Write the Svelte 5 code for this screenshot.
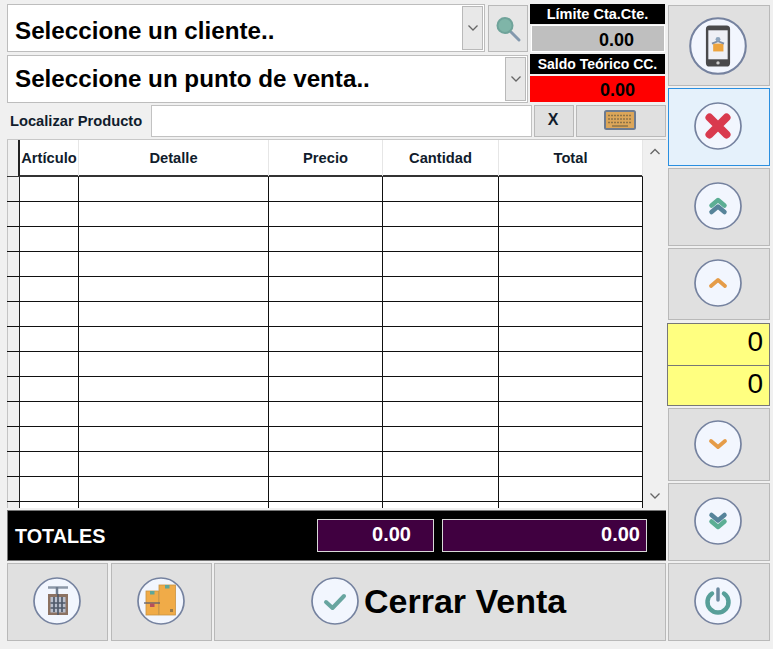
<script>
  // row markers for the empty sale grid
  const rows = Array.from({ length: 14 }, (_, i) => i);
  const cols = ['Artículo', 'Detalle', 'Precio', 'Cantidad', 'Total'];
</script>

{#snippet chevron()}
  <svg class="chev" viewBox="0 0 12 8"><path d="M1.500 1.500 6 6l4.500-4.500" /></svg>
{/snippet}

{#snippet ring(size, body)}
  <svg class="ring" width={size} height={size} viewBox="0 0 48 48">
    <circle cx="24" cy="24" r="23" class="disc" />
    {@render body()}
  </svg>
{/snippet}

{#snippet phone()}
  <rect x="14" y="7" width="20" height="34" rx="3" fill="#4a4a4c" />
  <rect x="16" y="11" width="16" height="24" fill="#eef0f6" />
  <circle cx="24" cy="38" r="1.400" fill="#ccc" />
  <rect x="20" y="22" width="8.500" height="6.500" fill="#eda43e" />
  <path d="M19 22l5-2 5 2" fill="none" stroke="#7f8fa6" stroke-width="1.500" />
  <circle cx="24" cy="18.500" r="2" fill="#8ea5bd" />
{/snippet}

{#snippet cross()}
  <path d="M15.500 15.500l17 17M32.500 15.500l-17 17" stroke="#d93a4e" stroke-width="8" stroke-linecap="round" />
{/snippet}

{#snippet upTwo()}
  <path d="M17.500 30l6.500-5.500 6.500 5.500" class="line" stroke="#56849a" stroke-width="4.500" />
  <path d="M17.500 23.500l6.500-5.500 6.500 5.500" class="line" stroke="#5cae94" stroke-width="4.500" />
{/snippet}

{#snippet upOne()}
  <path d="M17 27l7-6 7 6" class="line" stroke="#e59c48" stroke-width="3.800" />
{/snippet}

{#snippet downOne()}
  <path d="M17 21l7 6 7-6" class="line" stroke="#e59c48" stroke-width="3.800" />
{/snippet}

{#snippet downTwo()}
  <path d="M17.500 18l6.500 5.500 6.500-5.500" class="line" stroke="#56849a" stroke-width="4.500" />
  <path d="M17.500 24.500l6.500 5.500 6.500-5.500" class="line" stroke="#5cae94" stroke-width="4.500" />
{/snippet}

{#snippet power()}
  <path d="M18 16.500a10.500 10.500 0 1 0 12 0" class="line" stroke="#579f99" stroke-width="4.500" />
  <path d="M24 12v11" class="line" stroke="#6c8aa0" stroke-width="3.500" />
{/snippet}

{#snippet check()}
  <path d="M15 25l6.500 6L33 19" class="line" stroke="#68a5a0" stroke-width="4" />
{/snippet}

{#snippet press()}
  <path d="M15 10.500h20" stroke="#8d98a8" stroke-width="2.500" />
  <path d="M24 10v8" stroke="#6f7c8e" stroke-width="2.500" />
  <rect x="15" y="17" width="20" height="21" fill="#8c7262" />
  <rect x="17.500" y="20" width="15" height="15.500" fill="#b9bfcd" />
  <path d="M25 17v21M21 20v15M29 20v15M17.500 26h15M17.500 31h15" stroke="#4f5a6a" stroke-width="1.700" />
{/snippet}

{#snippet boxes()}
  <rect x="9" y="14" width="12.500" height="24" fill="#f0ab48" stroke="#c99342" stroke-width=".8" />
  <rect x="22" y="8" width="16.500" height="30" fill="#f0ab48" stroke="#c99342" stroke-width=".8" />
  <rect x="13" y="14" width="4.500" height="3.500" fill="#5ea69a" />
  <rect x="28" y="8" width="4.500" height="3.500" fill="#5ea69a" />
  <path d="M7 26h16" stroke="#5c5f70" stroke-width="1.300" />
  <rect x="13" y="26.500" width="4.500" height="3.500" fill="#b8505a" />
  <rect x="33" y="32" width="3" height="3" fill="#9a7a48" />
{/snippet}

<div class="shell">
  <div class="left">
    <div class="head">
      <div class="pickers">
        <div class="pick-row">
          <div class="combo low">
            <span>Seleccione un cliente..</span>
            <div class="drop">{@render chevron()}</div>
          </div>
          <button class="btn search" aria-label="Buscar">
            <svg width="30" height="30" viewBox="0 0 30 30">
              <path d="M18 18l8 8" stroke="#8398ad" stroke-width="3" stroke-linecap="round" />
              <circle cx="12" cy="11.500" r="7.500" fill="#7fb5a8" stroke="#6fa39a" stroke-width="2" />
            </svg>
          </button>
        </div>
        <div class="combo">
          <span>Seleccione un punto de venta..</span>
          <div class="drop">{@render chevron()}</div>
        </div>
      </div>
      <div class="info">
        <div class="cap">Límite Cta.Cte.</div>
        <div class="amount grey">0.00</div>
        <div class="cap second">Saldo Teórico CC.</div>
        <div class="amount red">0.00</div>
      </div>
    </div>

    <div class="finder">
      <span class="finder-label">Localizar Producto</span>
      <input class="finder-input" type="text" />
      <button class="btn clear">X</button>
      <button class="btn keys" aria-label="Teclado">
        <svg width="32" height="20" viewBox="0 0 32 20">
          <rect x="1" y="1" width="30" height="18" rx="1.500" fill="#dca659" stroke="#6d7b90" stroke-width="2" />
          <path d="M4 5.500h24M4 9h24M4 12.500h24" stroke="#8d7348" stroke-width="1.500" stroke-dasharray="2 1" />
          <path d="M8 16h16" stroke="#8d7348" stroke-width="1.500" />
        </svg>
      </button>
    </div>

    <div class="grid-wrap">
      <div class="table">
        <div class="tr th">
          <div class="stub"></div>
          {#each cols as col}
            <div class="cell">{col}</div>
          {/each}
        </div>
        {#each rows as r (r)}
          <div class="tr">
            <div class="stub"></div>
            {#each cols as col}
              <div class="cell"></div>
            {/each}
          </div>
        {/each}
      </div>
      <div class="scroll">
        <svg class="chev up" viewBox="0 0 12 8"><path d="M1.500 6 6 1.500 10.500 6" /></svg>
        {@render chevron()}
      </div>
    </div>

    <div class="totals">
      <strong>TOTALES</strong>
      <div class="sum short">0.00</div>
      <div class="sum long">0.00</div>
    </div>

    <div class="actions">
      <button class="btn square" aria-label="Prensa">{@render ring(48, press)}</button>
      <button class="btn square" aria-label="Cajas">{@render ring(48, boxes)}</button>
      <button class="btn close-sale">{@render ring(48, check)}<span>Cerrar Venta</span></button>
    </div>
  </div>

  <div class="side">
    <button class="btn phone" aria-label="Móvil">{@render ring(58, phone)}</button>
    <button class="btn active" aria-label="Cancelar">{@render ring(48, cross)}</button>
    <button class="btn" aria-label="Primero">{@render ring(48, upTwo)}</button>
    <button class="btn" aria-label="Subir">{@render ring(48, upOne)}</button>
    <div class="counters">
      <div>0</div>
      <div>0</div>
    </div>
    <button class="btn" aria-label="Bajar">{@render ring(48, downOne)}</button>
    <button class="btn" aria-label="Último">{@render ring(48, downTwo)}</button>
    <button class="btn" aria-label="Salir">{@render ring(48, power)}</button>
  </div>
</div>

<style>
  :global(body) {
    margin: 0;
    background: #f0f0f0;
  }

  .shell {
    display: flex;
    gap: 2px;
    width: 773px;
    height: 649px;
    box-sizing: border-box;
    padding: 4px 0 0 7px;
    font-family: "Liberation Sans", Arial, sans-serif;
    color: #000;
    background: #f0f0f0;
  }

  .left {
    display: flex;
    flex-direction: column;
    width: 659px;
  }

  .btn {
    display: flex;
    align-items: center;
    justify-content: center;
    padding: 0 2px 2px 0;
    box-sizing: border-box;
    border: 1px solid #b9b9b9;
    background: #e0e0e0;
    font-family: inherit;
  }

  .ring {
    flex: none;
    filter: blur(0.3px);
  }

  .disc {
    fill: #f2f6fe;
    stroke: #75829f;
    stroke-width: 1.700;
  }

  .line {
    fill: none;
    stroke-linecap: round;
    stroke-linejoin: round;
  }

  .chev {
    width: 12px;
    height: 8px;
    fill: none;
    stroke: #666;
    stroke-width: 1.300;
  }

  .head {
    display: flex;
    gap: 2px;
    height: 99px;
  }

  .pickers {
    display: flex;
    flex-direction: column;
    gap: 3px;
    width: 521px;
  }

  .pick-row {
    display: flex;
    gap: 3px;
    height: 48px;
  }

  .combo {
    flex: 1;
    display: flex;
    align-items: center;
    justify-content: space-between;
    box-sizing: border-box;
    height: 48px;
    padding: 0 1px 0 7px;
    border: 1px solid #bdbdbd;
    background: #fff;
    font-size: 24.200px;
    font-weight: bold;
  }

  .combo.low span {
    padding-top: 6px;
  }

  .drop {
    display: flex;
    align-items: center;
    justify-content: center;
    box-sizing: border-box;
    width: 21px;
    height: 44px;
    border: 1px solid #b9b9b9;
    background: #e8e8e8;
  }

  .search {
    width: 40px;
    height: 47px;
    margin-top: 1px;
    padding: 0;
    background: #e6e6e6;
  }

  .info {
    display: flex;
    flex-direction: column;
    width: 135px;
  }

  .cap {
    height: 20px;
    background: #000;
    color: #fff;
    font-size: 14.500px;
    font-weight: bold;
    line-height: 20px;
    text-align: center;
  }

  .cap.second {
    margin-top: 2px;
    font-size: 14px;
  }

  .amount {
    box-sizing: border-box;
    padding-right: 30px;
    font-size: 18px;
    font-weight: bold;
    text-align: right;
  }

  .grey {
    height: 27px;
    margin: 1px 0 0 1px;
    border: 1px solid #fff;
    background: #bfbfbf;
    line-height: 28px;
  }

  .red {
    height: 26px;
    margin-top: 2px;
    background: #f00;
    line-height: 28px;
  }

  .finder {
    display: flex;
    align-items: stretch;
    height: 32px;
    margin-top: 2px;
  }

  .finder-label {
    width: 144px;
    padding-left: 3px;
    box-sizing: border-box;
    color: #111c2c;
    font-size: 14.700px;
    font-weight: bold;
    line-height: 32px;
    white-space: nowrap;
  }

  .finder-input {
    width: 381px;
    margin: 0;
    padding: 0;
    box-sizing: border-box;
    border: 1px solid #c2c2c2;
    background: #fff;
  }

  .clear {
    width: 40px;
    margin-left: 2px;
    color: #111c2c;
    font-size: 16px;
    font-weight: bold;
  }

  .keys {
    width: 90px;
    margin-left: 2px;
  }

  .grid-wrap {
    display: flex;
    height: 369px;
    margin: 2px 0 2px;
    overflow: hidden;
    border-top: 1px solid #c8c8c8;
    box-sizing: border-box;
  }

  .table {
    width: 636px;
    background: #fff;
  }

  .tr {
    display: grid;
    grid-template-columns: 13px 59px 190px 114px 116px 144px;
    height: 25px;
    box-sizing: border-box;
    border-bottom: 1px solid #111;
  }

  .tr.th {
    height: 37px;
    border-bottom: 2px solid #333;
  }

  .stub {
    box-sizing: border-box;
    border-left: 1px solid #c4c4c4;
    border-right: 1px solid #222;
    background: #f0f0f0;
  }

  .th .stub {
    border-right-width: 2px;
  }

  .cell {
    border-right: 1px solid #111;
  }

  .th .cell {
    border-right: 1px solid #e6e6e6;
    color: #111c2c;
    font-size: 14.700px;
    font-weight: bold;
    line-height: 36px;
    text-align: center;
    white-space: nowrap;
  }

  .scroll {
    display: flex;
    flex: 1;
    flex-direction: column;
    align-items: center;
    justify-content: space-between;
    padding: 8px 0 8px;
    background: #f0f0f0;
  }

  .totals {
    display: flex;
    align-items: center;
    box-sizing: border-box;
    height: 51px;
    padding: 0 19px 0 7px;
    border: 1px solid #777;
    border-right: 0;
    background: #000;
    color: #fff;
  }

  .totals strong {
    width: 302px;
    padding-top: 1px;
    font-size: 19.800px;
  }

  .sum {
    box-sizing: border-box;
    height: 33px;
    padding-right: 6px;
    border: 1px solid #d8d8d8;
    background: #400040;
    font-size: 20px;
    font-weight: bold;
    line-height: 29px;
    text-align: right;
  }

  .short {
    width: 117px;
    padding-right: 22px;
    margin-right: 8px;
  }

  .long {
    width: 205px;
  }

  .actions {
    display: flex;
    gap: 3px;
    height: 78px;
    margin-top: 2px;
  }

  .square {
    width: 101px;
  }

  .close-sale {
    flex: 1;
    justify-content: flex-start;
    margin-left: -1px;
    padding-left: 96px;
    gap: 5px;
    font-size: 34px;
    font-weight: bold;
    color: #000;
  }

  .side {
    display: grid;
    grid-template-rows: 81px 78px 78px 72px 84px 73px 78px 78px;
    gap: 2px;
    width: 102px;
    padding-top: 1px;
    align-content: start;
  }

  .phone {
    padding-bottom: 0;
  }

  .active {
    border: 1px solid #2a8fe0;
    background: #e5f1fb;
  }

  .counters {
    display: grid;
    grid-template-rows: 41px 41px;
    margin: 1px 0 0 -1px;
    height: 83px;
    box-sizing: border-box;
    border: 1px solid #777;
    background: #ffff80;
    font-size: 28px;
    line-height: 36px;
    text-align: right;
  }

  .counters div {
    padding-right: 6px;
  }

  .counters div + div {
    border-top: 1px solid #777;
  }
</style>
